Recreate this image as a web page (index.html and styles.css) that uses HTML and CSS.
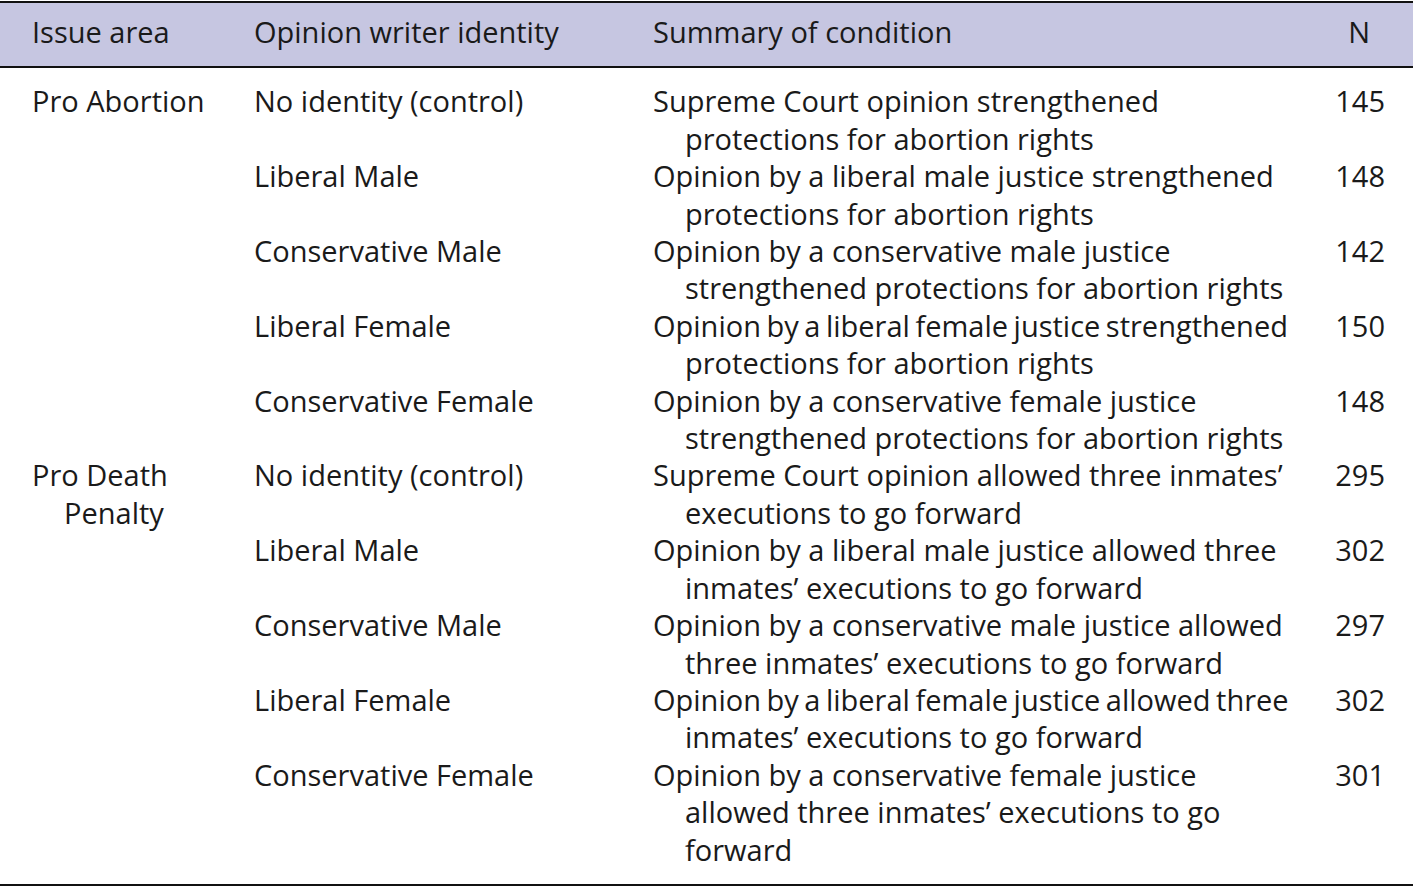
FILE: index.html
```html
<!DOCTYPE html>
<html lang="en">
<head>
<meta charset="utf-8">
<title>Conditions table</title>
<link rel="stylesheet" href="styles.css">
</head>
<body>
<table class="cond">
  <colgroup>
    <col class="c-issue">
    <col class="c-writer">
    <col class="c-summary">
    <col class="c-n">
  </colgroup>
  <thead>
    <tr>
      <th class="issue">Issue area</th>
      <th class="writer">Opinion writer identity</th>
      <th class="summary">Summary of condition</th>
      <th class="n head-n">N</th>
    </tr>
  </thead>
  <tbody>
    <tr class="first">
      <td class="issue"><div class="hang">Pro Abortion</div></td>
      <td class="writer">No identity (control)</td>
      <td class="summary"><div class="hang">Supreme Court opinion strengthened<br>protections for abortion rights</div></td>
      <td class="n">145</td>
    </tr>
    <tr>
      <td class="issue"></td>
      <td class="writer">Liberal Male</td>
      <td class="summary"><div class="hang">Opinion by a liberal male justice strengthened<br>protections for abortion rights</div></td>
      <td class="n">148</td>
    </tr>
    <tr>
      <td class="issue"></td>
      <td class="writer">Conservative Male</td>
      <td class="summary"><div class="hang">Opinion by a conservative male justice<br>strengthened protections for abortion rights</div></td>
      <td class="n">142</td>
    </tr>
    <tr>
      <td class="issue"></td>
      <td class="writer">Liberal Female</td>
      <td class="summary"><div class="hang"><span class="tight">Opinion by a liberal female justice strengthened</span><br>protections for abortion rights</div></td>
      <td class="n">150</td>
    </tr>
    <tr>
      <td class="issue"></td>
      <td class="writer">Conservative Female</td>
      <td class="summary"><div class="hang">Opinion by a conservative female justice<br>strengthened protections for abortion rights</div></td>
      <td class="n">148</td>
    </tr>
    <tr>
      <td class="issue"><div class="hang">Pro Death<br>Penalty</div></td>
      <td class="writer">No identity (control)</td>
      <td class="summary"><div class="hang">Supreme Court opinion allowed three inmates’<br>executions to go forward</div></td>
      <td class="n">295</td>
    </tr>
    <tr>
      <td class="issue"></td>
      <td class="writer">Liberal Male</td>
      <td class="summary"><div class="hang">Opinion by a liberal male justice allowed three<br>inmates’ executions to go forward</div></td>
      <td class="n">302</td>
    </tr>
    <tr>
      <td class="issue"></td>
      <td class="writer">Conservative Male</td>
      <td class="summary"><div class="hang">Opinion by a conservative male justice allowed<br>three inmates’ executions to go forward</div></td>
      <td class="n">297</td>
    </tr>
    <tr>
      <td class="issue"></td>
      <td class="writer">Liberal Female</td>
      <td class="summary"><div class="hang"><span class="tight">Opinion by a liberal female justice allowed three</span><br>inmates’ executions to go forward</div></td>
      <td class="n">302</td>
    </tr>
    <tr class="last">
      <td class="issue"></td>
      <td class="writer">Conservative Female</td>
      <td class="summary"><div class="hang">Opinion by a conservative female justice<br>allowed three inmates’ executions to go<br>forward</div></td>
      <td class="n">301</td>
    </tr>
  </tbody>
</table>
</body>
</html>
```

FILE: styles.css
```css
html, body {
  margin: 0;
  padding: 0;
  background: #ffffff;
}

body {
  padding-top: 1px;
  font-family: "Open Sans", "Noto Sans", "DejaVu Sans", sans-serif;
  font-size: 29px;
  line-height: 37.4px;
  color: #1a1a1a;
}

.cond {
  width: 1413px;
  border-collapse: collapse;
  table-layout: fixed;
  border-top: 2.5px solid #111111;
  border-bottom: 2.5px solid #111111;
}

.c-issue { width: 254px; }
.c-writer { width: 399px; }
.c-summary { width: 660px; }
.c-n { width: 100px; }

.cond th,
.cond td {
  padding: 0;
  vertical-align: top;
  text-align: left;
  font-weight: normal;
  white-space: nowrap;
}

.cond thead th {
  background: #c6c6e1;
  padding-top: 10px;
  padding-bottom: 16px;
  border-bottom: 2px solid #111111;
}

.cond .issue { padding-left: 32px; }
.cond .n { text-align: right; padding-right: 28px; }
.cond thead th.head-n { padding-right: 43px; }

.hang {
  padding-left: 32px;
  text-indent: -32px;
}

.tight { word-spacing: -2px; }

.cond tbody tr.first td { padding-top: 14px; }
.cond tbody tr.last td { padding-bottom: 16px; }
```
